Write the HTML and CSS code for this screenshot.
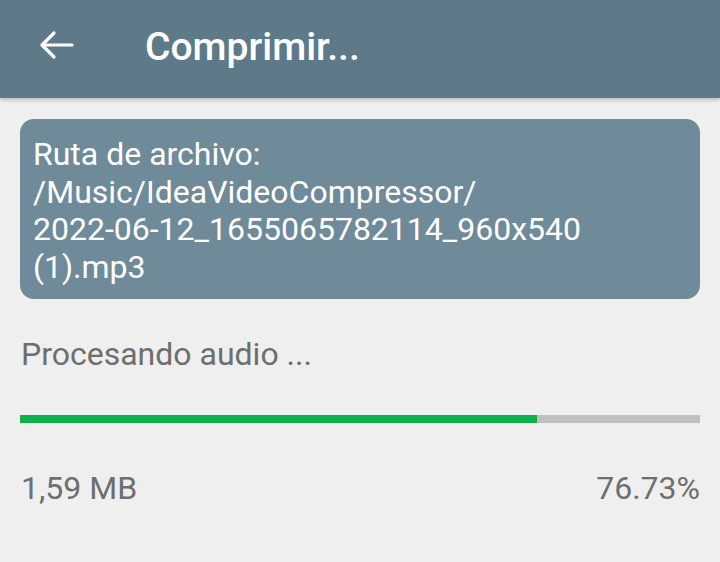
FILE: index.html
```html
<!DOCTYPE html>
<html lang="es">
<head>
<meta charset="utf-8">
<link rel="stylesheet" href="styles.css">
</head>
<body>
<header class="appbar">
  <svg class="back" width="36" height="30" viewBox="0 0 36 30" aria-hidden="true">
    <path d="M34 15H4M16 3L4 15l12 12" fill="none" stroke="#fff" stroke-width="3.2" stroke-linecap="round" stroke-linejoin="round"/>
  </svg>
  <h1 class="title">Comprimir...</h1>
</header>
<main class="content">
  <div class="card">
    <p>Ruta de archivo:</p>
    <p>/Music/IdeaVideoCompressor/</p>
    <p>2022-06-12_1655065782114_960x540</p>
    <p>(1).mp3</p>
  </div>
  <p class="status">Procesando audio ...</p>
  <div class="track"><div class="fill" style="width:76%"></div></div>
  <div class="stats">
    <span>1,59 MB</span>
    <span>76.73%</span>
  </div>
</main>
</body>
</html>
```
FILE: styles.css
```css
* { box-sizing: border-box; }
html, body { margin: 0; padding: 0; }
body {
  width: 720px;
  height: 562px;
  overflow: hidden;
  background: #efefef;
  font-family: Roboto, "Noto Sans", sans-serif;
}
.appbar {
  height: 98px;
  background: #5e7a88;
  display: flex;
  align-items: center;
  padding-left: 38px;
  padding-bottom: 8px;
  box-shadow: 0 2px 4px rgba(0,0,0,0.22);
  position: relative;
}
.back { flex: none; }
.title {
  margin: 4px 0 0 71px;
  color: #fff;
  font-size: 39px;
  line-height: 46px;
  font-weight: 500;
}
.content {
  padding: 21px 20px 0 20px;
}
.card {
  background: #6f8a99;
  border-radius: 14px;
  padding: 17px 13px 13px 13px;
  color: #fff;
  font-size: 32px;
  line-height: 37.5px;
}
.card p { margin: 0; }
.status {
  margin: 36px 0 0 1px;
  color: #6e6e6e;
  font-size: 32px;
  line-height: 38px;
}
.track {
  margin-top: 42px;
  height: 8px;
  background: #c0c0c0;
}
.fill {
  height: 100%;
  background: #0cb14b;
}
.stats {
  margin-top: 46px;
  display: flex;
  justify-content: space-between;
  color: #6e6e6e;
  font-size: 32px;
  line-height: 38px;
  padding-left: 1px;
}
```
